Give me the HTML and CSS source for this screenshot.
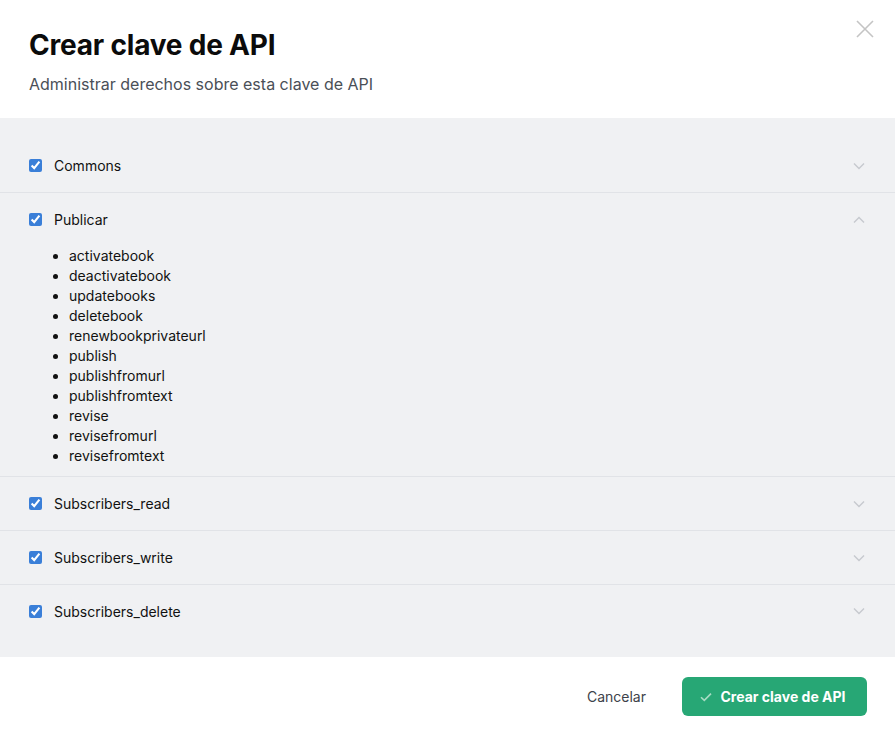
FILE: index.html
```html
<!DOCTYPE html>
<html lang="es">
<head>
<meta charset="utf-8">
<title>Crear clave de API</title>
<link rel="stylesheet" href="styles.css">
</head>
<body>
<div class="modal">
  <header class="head">
    <h1 class="title">Crear clave de API</h1>
    <p class="subtitle">Administrar derechos sobre esta clave de API</p>
    <button class="close" aria-label="Cerrar">
      <svg width="18" height="18" viewBox="0 0 18 18"><path d="M1 1L17 17M17 1L1 17" stroke="#c4c4c4" stroke-width="1.6" fill="none"/></svg>
    </button>
  </header>
  <section class="body">
    <div class="group">
      <div class="row">
        <input type="checkbox" class="cb" checked>
        <span class="label">Commons</span>
        <svg class="chev" width="12" height="8" viewBox="0 0 12 8"><path d="M1 1.5L6 6.5L11 1.5" stroke="#c6c9ce" stroke-width="1.4" fill="none"/></svg>
      </div>
    </div>
    <div class="group open">
      <div class="row">
        <input type="checkbox" class="cb" checked>
        <span class="label">Publicar</span>
        <svg class="chev" width="12" height="8" viewBox="0 0 12 8"><path d="M1 6.5L6 1.5L11 6.5" stroke="#c6c9ce" stroke-width="1.4" fill="none"/></svg>
      </div>
      <ul class="perms">
        <li>activatebook</li>
        <li>deactivatebook</li>
        <li>updatebooks</li>
        <li>deletebook</li>
        <li>renewbookprivateurl</li>
        <li>publish</li>
        <li>publishfromurl</li>
        <li>publishfromtext</li>
        <li>revise</li>
        <li>revisefromurl</li>
        <li>revisefromtext</li>
      </ul>
    </div>
    <div class="group">
      <div class="row">
        <input type="checkbox" class="cb" checked>
        <span class="label">Subscribers_read</span>
        <svg class="chev" width="12" height="8" viewBox="0 0 12 8"><path d="M1 1.5L6 6.5L11 1.5" stroke="#c6c9ce" stroke-width="1.4" fill="none"/></svg>
      </div>
    </div>
    <div class="group">
      <div class="row">
        <input type="checkbox" class="cb" checked>
        <span class="label">Subscribers_write</span>
        <svg class="chev" width="12" height="8" viewBox="0 0 12 8"><path d="M1 1.5L6 6.5L11 1.5" stroke="#c6c9ce" stroke-width="1.4" fill="none"/></svg>
      </div>
    </div>
    <div class="group last">
      <div class="row">
        <input type="checkbox" class="cb" checked>
        <span class="label">Subscribers_delete</span>
        <svg class="chev" width="12" height="8" viewBox="0 0 12 8"><path d="M1 1.5L6 6.5L11 1.5" stroke="#c6c9ce" stroke-width="1.4" fill="none"/></svg>
      </div>
    </div>
  </section>
  <footer class="foot">
    <button class="btn-cancel">Cancelar</button>
    <button class="btn-primary">
      <svg width="12" height="10" viewBox="0 0 12 10"><path d="M1 5.2L4.3 8.4L11 1.6" stroke="#a8dcc4" stroke-width="1.6" fill="none"/></svg>
      <span>Crear clave de API</span>
    </button>
  </footer>
</div>
</body>
</html>
```

FILE: styles.css
```css
* { box-sizing: border-box; }
html, body { margin: 0; padding: 0; background: #fff; }
body { font-family: Inter, "Noto Sans", "Liberation Sans", sans-serif; color: #111; }

.modal { width: 895px; height: 738px; display: flex; flex-direction: column; }

.head { position: relative; height: 118px; padding: 28px 29px 0; background: #fff; }
.title { margin: 0; font-size: 28px; font-weight: 700; line-height: 34px; color: #0b0b0b; letter-spacing: -0.2px; }
.subtitle { margin: 12px 0 0; font-size: 16px; line-height: 20px; color: #4a4f57; }
.close { position: absolute; top: 20px; right: 21px; border: 0; background: none; padding: 0; width: 18px; height: 18px; }
.close svg { display: block; }

.body { background: #f0f1f3; padding: 21px 0 20px; flex: 0 0 539px; }
.group { border-bottom: 1px solid #e1e3e7; }
.group.last { border-bottom: 0; }
.row { height: 53px; display: flex; align-items: center; padding: 0 29px; }
.group.last .row { height: 52px; }
.cb { margin: 0 12px 0 0; width: 13px; height: 13px; accent-color: #3a7fd8; }
.label { font-size: 14px; flex: 1; color: #111; }
.chev { margin-right: 1px; }

.perms { margin: 0; padding: 0 0 10px 69px; font-size: 14px; line-height: 20px; color: #111; }
.perms li { padding-left: 0; }

.foot { flex: 1; display: flex; align-items: center; justify-content: flex-end; padding: 0 28px 2px 0; gap: 36px; background: #fff; }
.btn-cancel { border: 0; background: none; font-family: inherit; font-size: 14px; color: #3d424a; padding: 0; }
.btn-primary { height: 39px; width: 185px; border: 0; border-radius: 6px; background: #27a775; color: #fff; font-family: inherit; font-size: 14px; font-weight: 700; display: flex; align-items: center; justify-content: center; gap: 9px; padding: 0 4px 0 0; }
.btn-primary svg { display: block; }
```
